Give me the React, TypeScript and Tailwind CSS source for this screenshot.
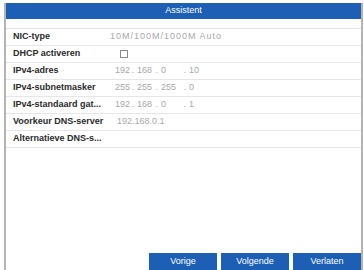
import React from 'react'

type Row = {
  label: string;
  value?: string;
  kind?: 'nic' | 'check' | 'ip' | 'dns';
  ip?: string[];
};

const rows: Row[] = [
  { label: 'NIC-type', value: '10M/100M/1000M Auto', kind: 'nic' },
  { label: 'DHCP activeren', kind: 'check' },
  { label: 'IPv4-adres', kind: 'ip', ip: ['192', '168', '0', '10'] },
  { label: 'IPv4-subnetmasker', kind: 'ip', ip: ['255', '255', '255', '0'] },
  { label: 'IPv4-standaard gat...', kind: 'ip', ip: ['192', '168', '0', '1'] },
  { label: 'Voorkeur DNS-server', value: '192.168.0.1', kind: 'dns' },
  { label: 'Alternatieve DNS-s...' },
];

// widths of each ip segment (number + dot)
const segW = ['w-[22px]', 'w-[24px]', 'w-[28px]', 'w-[20px]'];

const IpField = ({ parts }: { parts: string[] }) => (
  <div className="flex items-center pl-[5px] text-[#a8a8a8]">
    {parts.map((p, i) => (
      <div key={i} className={`${segW[i]} flex justify-between pr-[3px]`}>
        <span>{p}</span>
        {i < parts.length - 1 && <span>.</span>}
      </div>
    ))}
  </div>
);

const App = () => {
  return (
    <div
      className="w-[364px] h-[270px] bg-white pl-[4px] pr-[1px] pt-[3px] overflow-hidden"
      style={{ fontFamily: '"Liberation Sans", Arial, sans-serif' }}
    >
      <div className="h-full flex flex-col border-l-2 border-r-2 border-[#b4b4b4]">
        <div className="h-[16px] bg-[#1c5fb5] text-white text-[9px] flex items-center justify-center">
          Assistent
        </div>
        <div className="h-[10px] border-b border-[#e2e2e2]"></div>
        {rows.map((r) => (
          <div key={r.label} className="h-[17px] flex items-center border-b border-[#e6e6e6] text-[9px]">
            <div className="w-[104px] pl-[7px] text-[#2a2a2a] font-semibold whitespace-nowrap">{r.label}</div>
            <div className="text-[#a8a8a8]">
              {r.kind === 'nic' && <span className="tracking-[1px]">{r.value}</span>}
              {r.kind === 'check' && (
                <div className="ml-[10px] w-[8px] h-[8px] border border-[#8a8a8a] bg-white"></div>
              )}
              {r.kind === 'ip' && r.ip && <IpField parts={r.ip} />}
              {r.kind === 'dns' && <span className="pl-[7px]">{r.value}</span>}
            </div>
          </div>
        ))}
        <div className="flex-1"></div>
        <div className="flex justify-end gap-[4px]">
          <button className="w-[68px] h-[17px] bg-[#1c5fb5] text-white text-[9px]">Vorige</button>
          <button className="w-[68px] h-[17px] bg-[#1c5fb5] text-white text-[9px]">Volgende</button>
          <button className="w-[68px] h-[17px] bg-[#1c5fb5] text-white text-[9px]">Verlaten</button>
        </div>
      </div>
    </div>
  )
}

export default App
